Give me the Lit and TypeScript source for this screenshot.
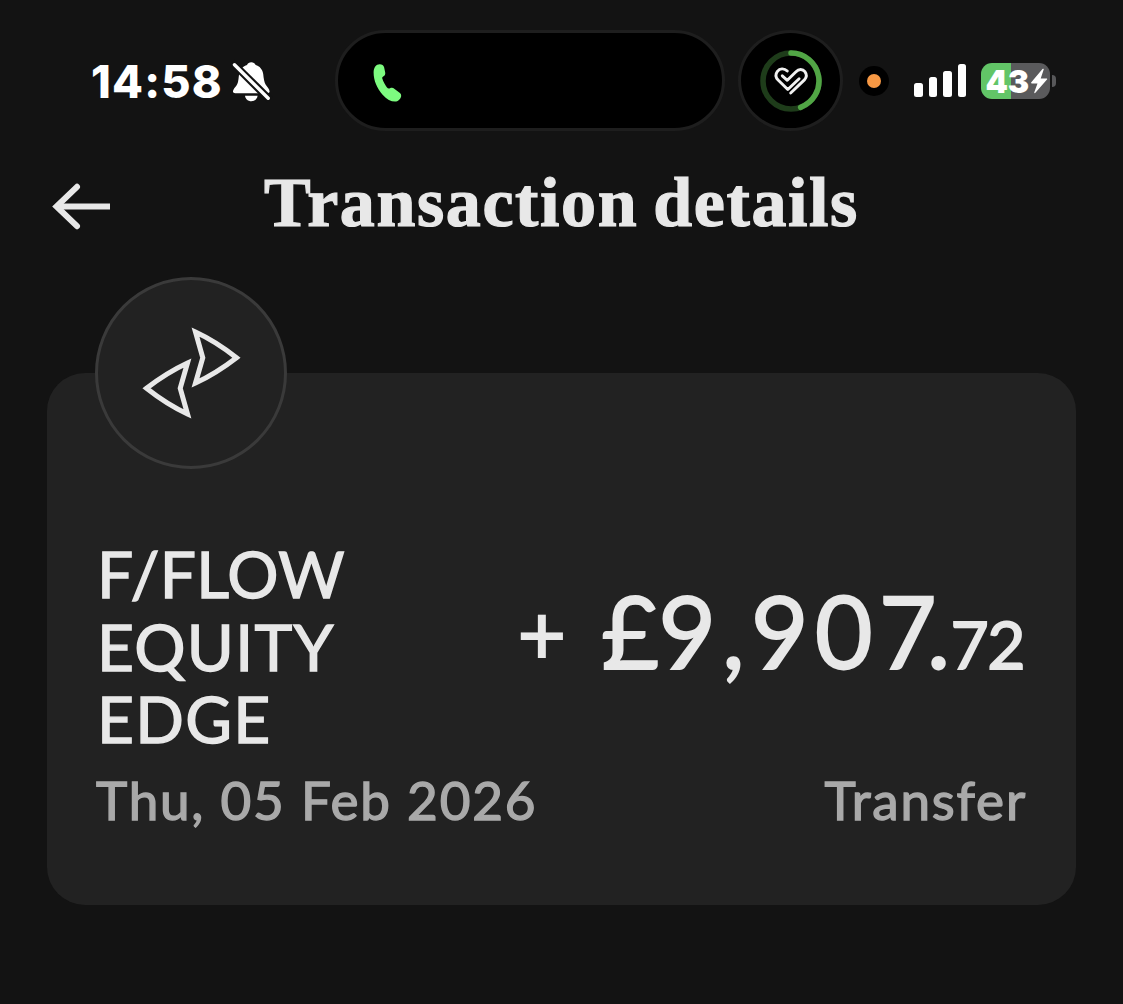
import { css, html, LitElement, svg } from "lit";
import { customElement, property } from "lit/decorators.js";

@customElement("x-status-bar")
export class StatusBar extends LitElement {
  @property({ type: String })
  time: string = "";

  @property({ type: Number })
  battery: number = 0;

  static styles = css`
    :host {
      display: flex;
      align-items: center;
      height: 105px;
      padding: 28px 60px 0 91px;
      color: white;
      font-family: "Inter", "Liberation Sans", sans-serif;
    }

    :host > * {
      flex: none;
    }

    svg {
      display: block;
    }

    .time {
      width: 139px;
      padding-top: 2px;
      font-size: 45px;
      font-weight: 800;
      line-height: 52px;
      letter-spacing: 1.2px;
      white-space: nowrap;
    }

    .bell {
      margin-right: 62px;
    }

    .island {
      box-sizing: border-box;
      display: flex;
      align-items: center;
      width: 390px;
      height: 101px;
      padding-left: 34px;
      background-color: black;
      border: 3px solid #1e1e1e;
      border-radius: 51px;
    }

    .call {
      margin-top: 4px;
    }

    .activity {
      box-sizing: border-box;
      display: flex;
      align-items: center;
      justify-content: center;
      width: 105px;
      height: 101px;
      margin-left: 13px;
      background-color: black;
      border: 3px solid #1e1e1e;
      border-radius: 50%;
    }

    .recording {
      display: flex;
      align-items: center;
      justify-content: center;
      width: 30px;
      height: 30px;
      margin-left: 16px;
      background-color: black;
      border-radius: 50%;
    }

    .dot {
      width: 14px;
      height: 14px;
      background-color: #f79844;
      border-radius: 50%;
    }

    .signal {
      display: flex;
      align-items: flex-end;
      gap: 6px;
      height: 33px;
      margin-left: 25px;
    }

    .bar {
      width: 8.6px;
      background-color: white;
      border-radius: 2.5px;
    }

    .battery {
      box-sizing: border-box;
      display: flex;
      align-items: center;
      width: 69px;
      height: 36px;
      margin-left: 15px;
      padding-left: 4px;
      border-radius: 11px;
    }

    .level {
      width: 45px;
      padding-top: 1px;
      font-size: 32px;
      font-weight: 900;
      line-height: 35px;
      letter-spacing: 0;
    }

    .nub {
      width: 4px;
      height: 12px;
      margin-left: 2px;
      background-color: #58585a;
      border-radius: 0 4px 4px 0;
    }
  `;

  render() {
    const fill = `background: linear-gradient(to right, #62c567 ${this.battery}%, #5a5a5c ${this.battery}%)`;

    return html`
      <span class="time">${this.time}</span>
      <svg class="bell" width="43" height="44" viewBox="0 0 43 44">
        <path
          fill="white"
          d="M3 32.5c0-3 4-5 5-9.500C9 19 8.500 15.500 10 12c1.500-3.500 4.500-5.500 7-6 .8-1.800 2.300-2.700 4.300-2.700s3.500.9 4.300 2.700c4 1 7 4.500 7.600 9 .5 4.500 1 8 2.400 10.500 1.500 2.500 4 4.500 4 7 0 1-1 1.700-2.200 1.700H5.200C4 34.200 3 33.500 3 32.500z"
        ></path>
        <path fill="white" d="M15 36.700h12.600c-.5 3.300-3 5.500-6.300 5.500s-5.800-2.200-6.300-5.500z"></path>
        <path
          stroke="#131313"
          stroke-width="7.500"
          d="M2 3.300l38 37.700"
        ></path>
        <path
          stroke="white"
          stroke-width="3.400"
          stroke-linecap="round"
          d="M4.500 5.800l33.700 33.400"
        ></path>
      </svg>
      <div class="island">
        <svg class="call" width="32" height="40" viewBox="0 0 32 40">
          <path
            fill="#7dfb80"
            d="M7.800 1.200C4 1.200 1.600 4.500 1.600 9.500c0 8 3.500 16 9 22.200 4 4.500 8.500 6.900 12.400 6.900 3 0 5.400-2.600 6.100-5.200.3-1.400-.3-2.700-1.500-3.600l-5-3.900c-1.700-1.300-3.200-1.200-4.600-.6-1.200.5-2.200.3-3-.7-1.800-2.300-3.700-5.800-4.700-9-.3-1 0-1.700.9-2.200 1.700-.9 2.300-2.100 2-4l-1.100-5.200C11.600 2.100 10 1.200 7.800 1.200z"
          ></path>
        </svg>
      </div>
      <div class="activity">
        <svg width="64" height="64" viewBox="0 0 64 64" fill="none">
          <circle cx="32" cy="32" r="28" stroke="#1e3c1a" stroke-width="5.500"></circle>
          <path
            stroke="#51a545"
            stroke-width="5.500"
            stroke-linecap="round"
            d="M32 4a28 28 0 0 1 9.600 54.300"
          ></path>
          <path
            stroke="#f0f0f0"
            stroke-width="2.900"
            stroke-linecap="round"
            stroke-linejoin="round"
            d="M28.300 22C25 18.800 20.700 19.400 18.400 22.300c-2 2.700-1.700 6.200.7 8.700L28.800 40.500l11.300-10.800M23.300 26.800l5 4.500L37 22.700c2.700-2.900 6.800-2.900 8.900 0 2 2.700 1.700 5.900-.5 8.200L31.700 44"
          ></path>
        </svg>
      </div>
      <div class="recording"><div class="dot"></div></div>
      <div class="signal">
        ${[14, 20, 26, 33].map(
          (height) => html`<div class="bar" style="height: ${height}px"></div>`
        )}
      </div>
      <div class="battery" style="${fill}">
        <span class="level">${this.battery}</span>
        <svg width="18" height="26" viewBox="0 0 18 26">
          <path fill="white" d="M12.500 1L1.300 14.300c-.5.6-.2 1.200.5 1.200h5.700L4.300 24.300c-.3.9.5 1.200 1.100.5L17 11.600c.5-.6.2-1.200-.5-1.200h-5.800l3-8.800c.3-.9-.6-1.300-1.200-.6z"></path>
        </svg>
      </div>
      <div class="nub"></div>
    `;
  }
}

@customElement("x-transaction-card")
export class TransactionCard extends LitElement {
  @property({ type: Array })
  payee: string[] = [];

  @property({ type: String })
  date: string = "";

  @property({ type: String })
  kind: string = "";

  @property({ type: String })
  pounds: string = "";

  @property({ type: String })
  pence: string = "";

  static styles = css`
    :host {
      box-sizing: border-box;
      display: flex;
      flex-direction: column;
      height: 532px;
      padding: 0 49px 0 48px;
      background-color: #222222;
      border-radius: 38px;
      color: #e8e8e8;
      font-family: "Lato", "Open Sans", sans-serif;
    }

    .badge {
      box-sizing: border-box;
      display: flex;
      align-items: center;
      justify-content: center;
      width: 192px;
      height: 192px;
      margin-top: -96px;
      background-color: #222222;
      border: 3px solid #3a3a3a;
      border-radius: 50%;
    }

    .summary {
      display: flex;
      align-items: flex-start;
      justify-content: space-between;
      height: 218px;
      margin-top: 69px;
    }

    .payee {
      padding-left: 2px;
      font-size: 64px;
      line-height: 72.5px;
      letter-spacing: 1.3px;
      white-space: nowrap;
      -webkit-text-stroke: 1.4px currentColor;
    }

    .line {
      display: block;
    }

    .line:first-child {
      letter-spacing: 0.3px;
    }

    .amount {
      display: flex;
      align-items: baseline;
      margin: 32px 3px 0 0;
      line-height: 120px;
      white-space: nowrap;
      -webkit-text-stroke: 1.8px currentColor;
    }

    .sign {
      align-self: flex-start;
      margin-right: 35px;
      font-size: 84px;
      line-height: 123px;
    }

    .currency,
    .pounds,
    .unit,
    .point {
      font-size: 100px;
    }

    .currency {
      letter-spacing: -1px;
    }

    .pounds {
      letter-spacing: 6px;
    }

    /* the last digit is kerned tight against the decimal point */
    .unit {
      letter-spacing: -10px;
    }

    .pence {
      font-size: 66px;
      letter-spacing: -1.5px;
    }

    .meta {
      display: flex;
      justify-content: space-between;
      margin-top: 12px;
      padding-left: 1px;
      color: #a9a9a9;
      font-size: 53px;
      line-height: 64px;
      letter-spacing: 1.8px;
      white-space: nowrap;
      -webkit-text-stroke: 1.4px currentColor;
    }
  `;

  render() {
    return html`
      <div class="badge">
        <svg width="100" height="92" viewBox="0 0 100 92" fill="none">
          ${["", "rotate(180 50.500 46)"].map(
            (turn) => svg`
              <path
                transform="${turn}"
                stroke="#e8e8e8"
                stroke-width="5"
                stroke-miterlimit="10"
                d="M54.500 5Q75 14.500 95.500 30.700Q75 46.500 54.500 56L61.800 30.700Z"
              ></path>
            `
          )}
        </svg>
      </div>
      <div class="summary">
        <div class="payee">
          ${this.payee.map((line) => html`<span class="line">${line}</span>`)}
        </div>
        <div class="amount">
          <span class="sign">+</span>
          <span class="currency">£</span>
          <span class="pounds">${this.pounds.slice(0, -1)}</span>
          <span class="unit">${this.pounds.slice(-1)}</span>
          <span class="point">.</span>
          <span class="pence">${this.pence}</span>
        </div>
      </div>
      <div class="meta">
        <span>${this.date}</span>
        <span>${this.kind}</span>
      </div>
    `;
  }
}

@customElement("app-root")
export class AppRoot extends LitElement {
  static styles = css`
    :host {
      box-sizing: border-box;
      display: block;
      width: 1123px;
      height: 1004px;
      overflow: hidden;
      background-color: #131313;
    }

    .header {
      display: grid;
      grid-template-columns: 64px 1fr 64px;
      align-items: center;
      height: 90px;
      margin: 28px 48px 0;
    }

    .back {
      padding: 0;
      background: none;
      border: none;
    }

    .back svg {
      display: block;
    }

    .title {
      margin: 0 0 6px;
      color: #e8e8e8;
      font-family: "Liberation Serif", serif;
      font-size: 70px;
      font-weight: 700;
      line-height: 80px;
      letter-spacing: 1.6px;
      word-spacing: -4px;
      text-align: center;
      white-space: nowrap;
      -webkit-text-stroke: 1.2px currentColor;
    }

    .card {
      margin: 122px 47px 0;
    }
  `;

  render() {
    return html`
      <x-status-bar time="14:58" battery="43"></x-status-bar>
      <header class="header">
        <button class="back" type="button" aria-label="Back">
          <svg width="64" height="50" viewBox="0 0 64 50" fill="none" stroke="#e8e8e8" stroke-width="6">
            <path d="M8 25.500h54"></path>
            <path stroke-linecap="round" d="M29 5.800L8.500 25.500L29 45.200"></path>
          </svg>
        </button>
        <h1 class="title">Transaction details</h1>
      </header>
      <x-transaction-card
        class="card"
        .payee="${["F/FLOW", "EQUITY", "EDGE"]}"
        date="Thu, 05 Feb 2026"
        kind="Transfer"
        pounds="9,907"
        pence="72"
      ></x-transaction-card>
    `;
  }
}
